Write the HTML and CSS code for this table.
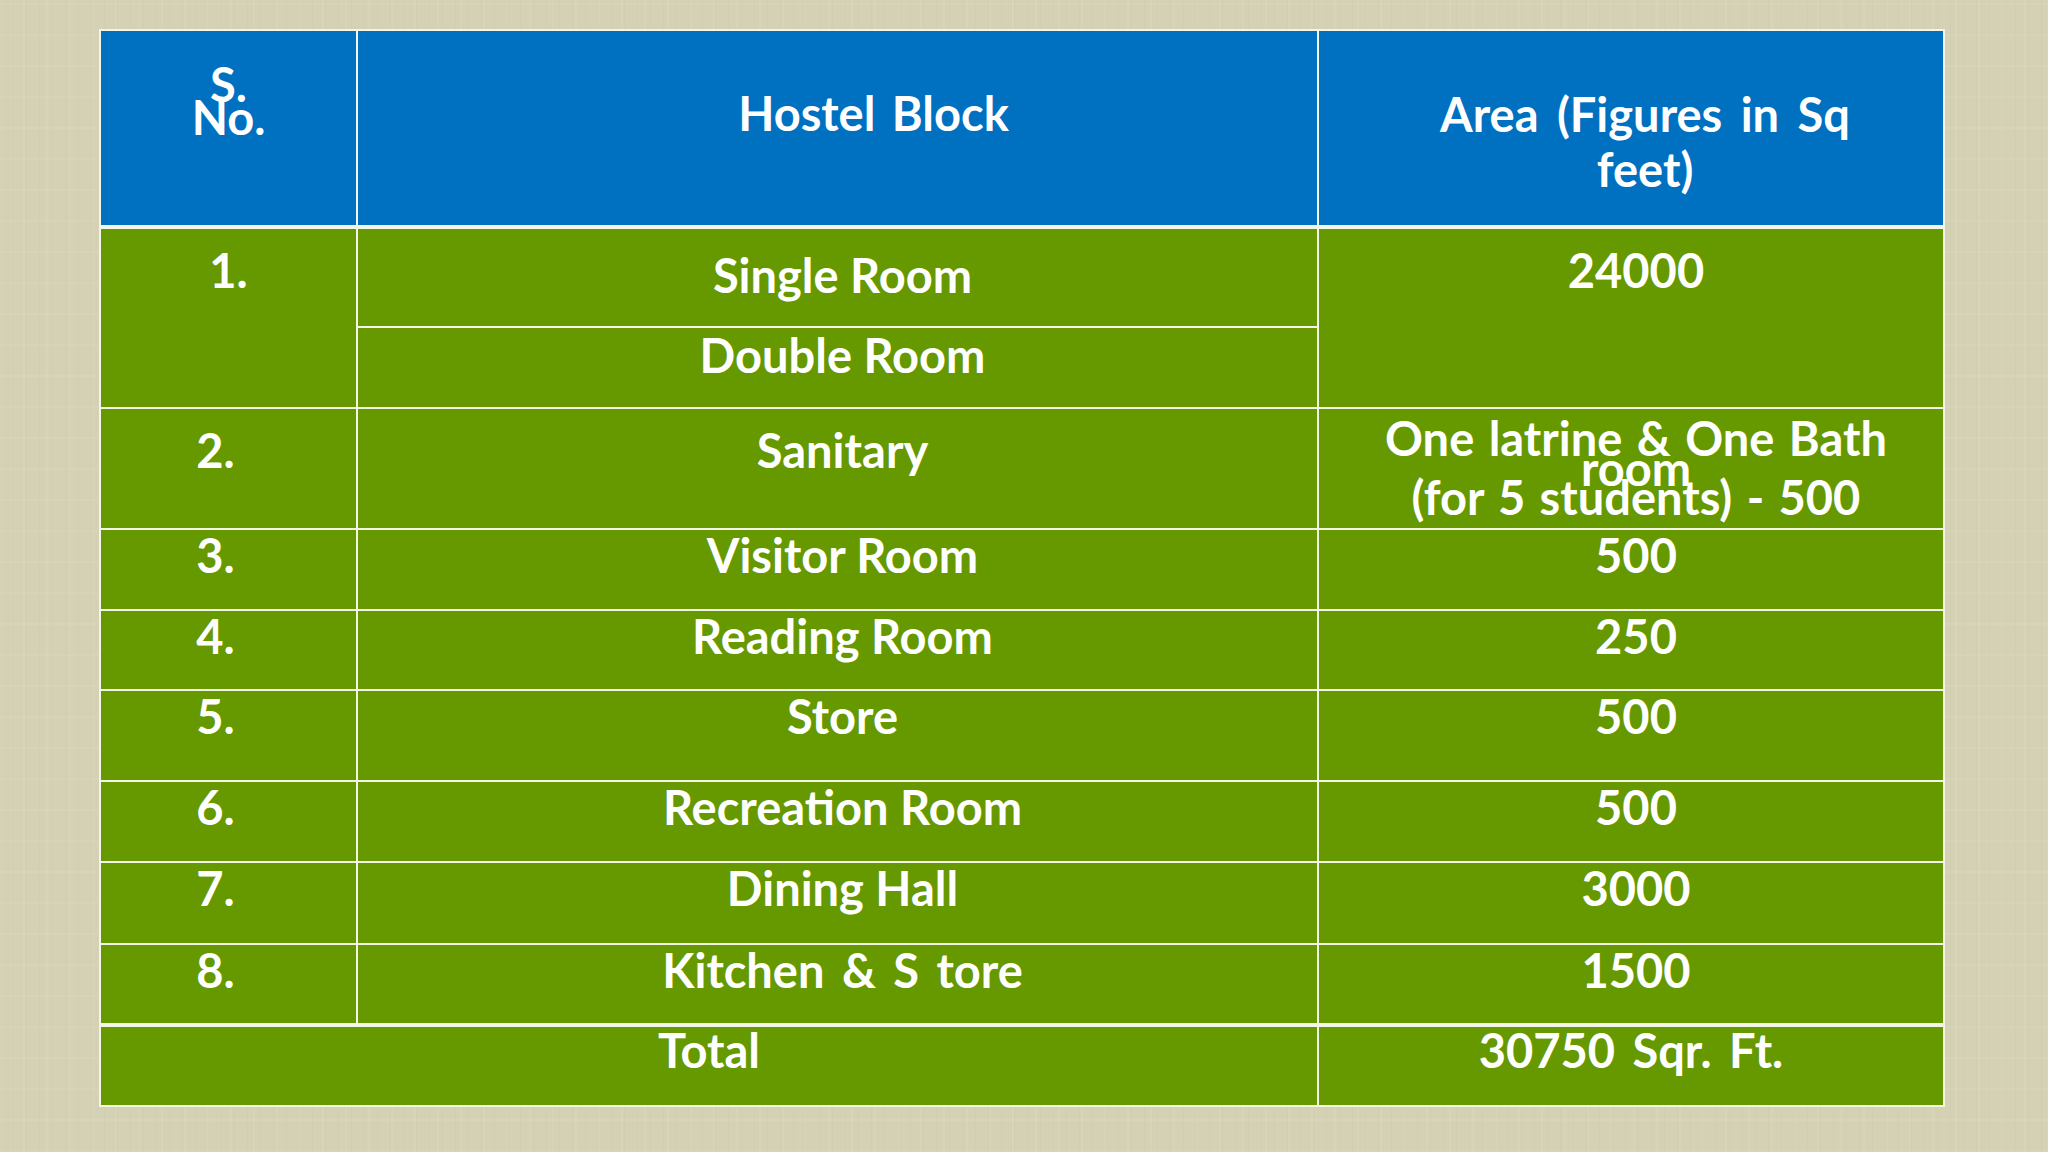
FILE: index.html
```html
<!DOCTYPE html>
<html lang="en">
<head>
<meta charset="utf-8">
<title>Hostel Block Areas</title>
<link rel="stylesheet" href="styles.css">
</head>
<body>
<main class="slide">
  <div class="grid">
    <div class="cell head c1 sno"><span>S.</span><span>No.</span></div>
    <div class="cell head c2 block">Hostel Block</div>
    <div class="cell head c3 area">Area (Figures in Sq<br>feet)</div>

    <div class="cell body c1 num n1">1.</div>
    <div class="cell body c2 name r1a">Single Room</div>
    <div class="cell body c3 val v1">24000</div>
    <div class="cell body c2 name r1b">Double Room</div>

    <div class="cell body c1 num r2">2.</div>
    <div class="cell body c2 name r2">Sanitary</div>
    <div class="cell body c3 val tight">One latrine &amp; One Bath room<br>(for 5 students) - 500</div>

    <div class="cell body c1 num">3.</div>
    <div class="cell body c2 name">Visitor Room</div>
    <div class="cell body c3 val">500</div>

    <div class="cell body c1 num">4.</div>
    <div class="cell body c2 name">Reading Room</div>
    <div class="cell body c3 val">250</div>

    <div class="cell body c1 num">5.</div>
    <div class="cell body c2 name">Store</div>
    <div class="cell body c3 val">500</div>

    <div class="cell body c1 num">6.</div>
    <div class="cell body c2 name">Recreation Room</div>
    <div class="cell body c3 val">500</div>

    <div class="cell body c1 num">7.</div>
    <div class="cell body c2 name">Dining Hall</div>
    <div class="cell body c3 val">3000</div>

    <div class="cell body c1 num">8.</div>
    <div class="cell body c2 name wide">Kitchen &amp; S tore</div>
    <div class="cell body c3 val">1500</div>

    <div class="cell body total-label">Total</div>
    <div class="cell body c3 total-val wide">30750 Sqr. Ft.</div>
  </div>
</main>
</body>
</html>
```

FILE: styles.css
```css
html, body {
  margin: 0;
  padding: 0;
}

body {
  width: 2048px;
  height: 1152px;
  overflow: hidden;
  background-color: #d5d1b5;
  background-image:
    repeating-linear-gradient(90deg, rgba(255,255,255,0.07) 0 2px, transparent 2px 23px),
    repeating-linear-gradient(0deg, rgba(255,255,255,0.06) 0 2px, transparent 2px 31px),
    repeating-linear-gradient(90deg, rgba(150,145,110,0.05) 0 1px, transparent 1px 13px);
  font-family: "Lato", "Open Sans", "Liberation Sans", sans-serif;
  font-weight: 700;
  color: #ffffff;
}

.slide {
  padding: 29px 0 0 99px;
}

.grid {
  width: 1846px;
  box-sizing: border-box;
  padding: 2px;
  background: #f3f6e6;
  display: grid;
  grid-template-columns: 255px 959px 624px;
  grid-template-rows: 196px 97px 79px 119px 79px 78px 89px 79px 80px 78px 80px;
  gap: 2px;
}

.cell {
  font-size: 47px;
  line-height: 1;
  text-align: center;
  box-sizing: border-box;
  padding-top: 2px;
}

.c1 { grid-column: 1; }
.c2 { grid-column: 2; }
.c3 { grid-column: 3; }

.head {
  background: #0070c0;
  margin-bottom: 2px;
}

.body {
  background: #669900;
}

/* header */
.sno {
  display: flex;
  flex-direction: column;
  align-items: center;
  padding-top: 37px;
  line-height: 33px;
}

.block {
  padding-top: 59px;
  padding-left: 72px;
  word-spacing: 5px;
}

.area {
  padding-top: 56px;
  padding-left: 28px;
  line-height: 55px;
  word-spacing: 7px;
}

/* first column numbers */
.num {
  padding-right: 26px;
}

.n1 {
  grid-row: 2 / span 2;
  padding-right: 0;
  padding-top: 18px;
}

.r1a {
  grid-row: 2;
  padding-top: 23px;
}

.r1b {
  grid-row: 3;
  padding-top: 4px;
}

.v1 {
  grid-row: 2 / span 2;
  padding-top: 18px;
}

.r2 {
  padding-top: 18px;
}

.val {
  padding-left: 10px;
}

.name {
  padding-left: 10px;
}

.wide {
  word-spacing: 6px;
}

.tight {
  line-height: 29.5px;
  padding: 15px 20px 0 30px;
  word-spacing: 3px;
}

.total-label {
  grid-column: 1 / span 2;
  margin-top: 2px;
  padding-top: 0;
}

.total-val {
  margin-top: 2px;
  padding-top: 0;
}
```
